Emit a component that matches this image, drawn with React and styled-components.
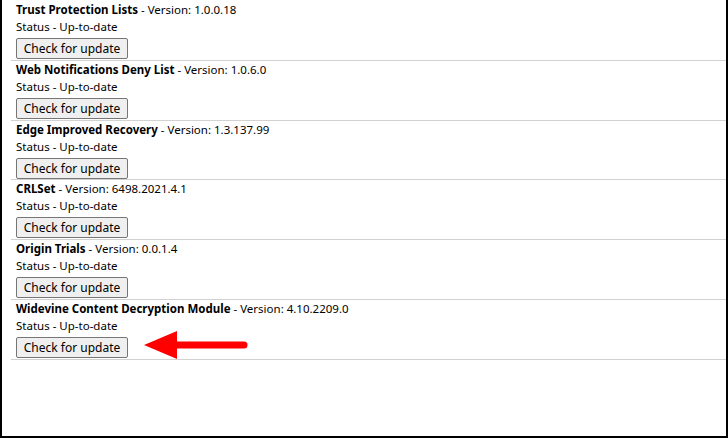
import React from 'react';
import styled, { createGlobalStyle } from "styled-components";

const GlobalStyle = createGlobalStyle`
body {
  margin: 0;
  background: #fff;
}
`

const Frame = styled.div`
position: relative;
box-sizing: border-box;
width: 728px;
height: 438px;
border-left: 2px solid #000;
border-right: 2px solid #000;
border-bottom: 2px solid #000;
padding: 1px 0 0 9px;
background: #fff;
font-family: "Noto Sans", "Open Sans", sans-serif;
font-size: 11.5px;
color: #000;
overflow: hidden;
`

const Row = styled.div`
box-sizing: border-box;
height: 59.8px;
padding: 0 0 0 5px;
border-bottom: 1px solid #d2d2d2;
display: flex;
flex-direction: column;
align-items: flex-start;
`

const Line = styled.div`
line-height: 17px;
white-space: nowrap;
`

const Name = styled.span`
font-weight: 700;
`

const Button = styled.button`
box-sizing: border-box;
margin-top: 3px;
width: 112px;
height: 21px;
padding: 0;
font-family: inherit;
font-size: 12px;
color: #000;
background: #efefef;
border: 1px solid #767676;
border-radius: 2px;
`

const Arrow = styled.svg`
position: absolute;
left: 140px;
top: 329px;
`

const components = [
  { name: 'Trust Protection Lists', version: '1.0.0.18' },
  { name: 'Web Notifications Deny List', version: '1.0.6.0' },
  { name: 'Edge Improved Recovery', version: '1.3.137.99' },
  { name: 'CRLSet', version: '6498.2021.4.1' },
  { name: 'Origin Trials', version: '0.0.1.4' },
  { name: 'Widevine Content Decryption Module', version: '4.10.2209.0' },
];

const App = () => {
  return (
    <>
      <GlobalStyle />
      <Frame>
        {components.map((c) => (
          <Row key={c.name}>
            <Line><Name>{c.name}</Name> - Version: {c.version}</Line>
            <Line>Status - Up-to-date</Line>
            <Button>Check for update</Button>
          </Row>
        ))}
        <Arrow width="110" height="32" viewBox="0 0 110 32">
          <polygon points="2,16 35,2 35,30" fill="#f00" />
          <line x1="32" y1="16" x2="102" y2="16" stroke="#f00" strokeWidth="7" strokeLinecap="round" />
        </Arrow>
      </Frame>
    </>
  )
}

export default App;
